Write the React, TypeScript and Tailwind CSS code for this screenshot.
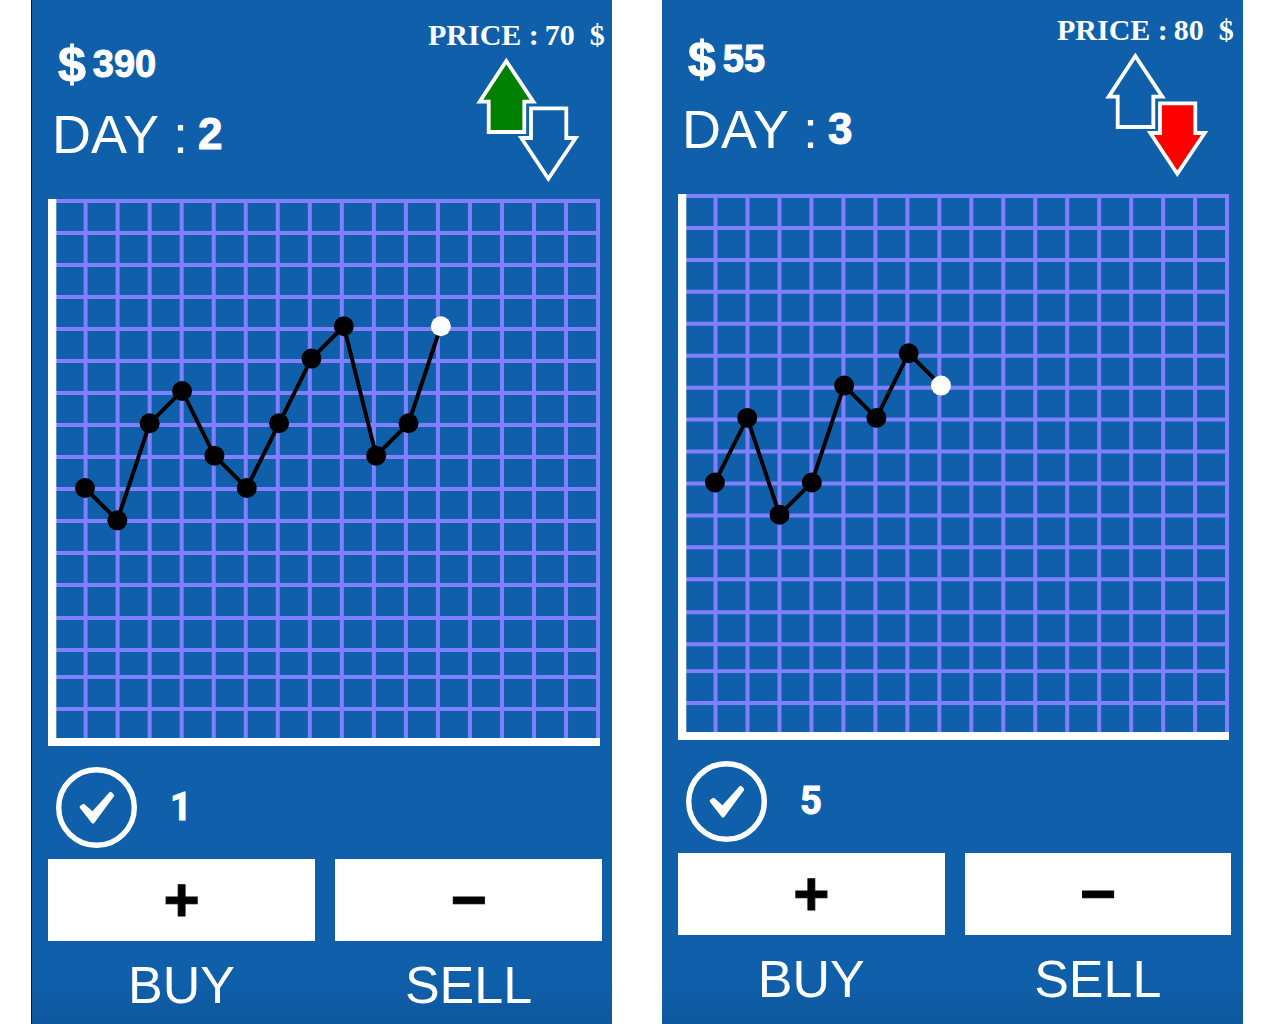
import { useId } from "react";

const COLUMNS = Array.from({ length: 17 }, (_, i) => 37.6 + i * 32.03);
const ROWS = [2, 34, 66, 98, 130, 162, 194, 226, 258, 290, 322, 354, 386, 419, 451, 478, 510];

const UP_ARROW = "30.3,3 3.7,43.7 12.7,43.7 12.7,74 48.3,74 48.3,43.7 57.3,43.7";
const DOWN_ARROW = "55,50.3 90.3,50.3 90.3,80 99.7,80 72.3,120.7 45.3,80 55,80";

type Game = {
  cash: number;
  day: number;
  price: number;
  shares: number;
  trend: "up" | "down";
  levels: number[];
};

function TrendArrows({ trend }: { trend: Game["trend"] }) {
  return (
    <svg
      className="ml-12 mt-1 block h-[124px] w-[104px]"
      viewBox="0 0 104 124"
      stroke="#fff"
      strokeWidth="3.8"
      role="img"
      aria-label={`Trend ${trend}`}
    >
      <polygon points={UP_ARROW} fill={trend === "up" ? "#008000" : "none"} />
      <polygon points={DOWN_ARROW} fill={trend === "down" ? "#ff0000" : "none"} />
    </svg>
  );
}

function Chart({ levels }: { levels: number[] }) {
  const points = levels.map((n, i) => ({ x: 37 + i * 32.35, y: 289 - n * 32.35 }));
  return (
    <svg className="block h-auto w-full" viewBox="0 0 552 547" role="img" aria-label="Price history">
      <g stroke="#8080ff" strokeWidth="4">
        {COLUMNS.map((x) => (
          <line key={x} x1={x} x2={x} y1="0" y2="540" />
        ))}
        {ROWS.map((y) => (
          <line key={y} x1="8" x2="552" y1={y} y2={y} />
        ))}
      </g>
      <path d="M0 0H8.3V539H552V547H0Z" fill="#fff" />
      <polyline
        points={points.map((p) => `${p.x},${p.y}`).join(" ")}
        fill="none"
        stroke="#000"
        strokeWidth="4"
      />
      {points.map((p, i) => (
        <circle key={i} cx={p.x} cy={p.y} r="10" fill={i === points.length - 1 ? "#fff" : "#000"} />
      ))}
    </svg>
  );
}

function CheckBadge() {
  return (
    <svg className="h-[81px] w-[81px]" viewBox="0 0 81 81" aria-hidden="true">
      <circle cx="40.5" cy="40.5" r="37.8" fill="none" stroke="#fff" strokeWidth="5.4" />
      <path
        d="M25.2 40L37 55L56.5 28.5L54.5 26.5L36.5 46.5L27.5 38.5Z"
        fill="#fff"
        stroke="#fff"
        strokeWidth="3.2"
        strokeLinejoin="round"
      />
    </svg>
  );
}

function Screen({ game, className }: { game: Game; className: string }) {
  const id = useId();
  return (
    <section
      className={`min-h-screen bg-[#105faa] bg-linear-to-b from-[#105faa] from-96% to-[#0d579d] pl-4 text-white ${className}`}
    >
      <header className="flex items-start justify-between">
        <div className="pt-6 pb-[30px]">
          <div className="flex h-[70px] items-center gap-[7px] pl-[10px]">
            <span className="text-[50px] font-bold [-webkit-text-stroke:1px_white]">$</span>
            <span className="text-[38px] font-bold [-webkit-text-stroke:1px_white]">{game.cash}</span>
          </div>
          <div className="flex h-[70px] items-center gap-[10px] pl-1">
            <span className="text-[54px]">DAY :</span>
            <span className="text-[44px] font-bold [-webkit-text-stroke:1px_white]">{game.day}</span>
          </div>
        </div>
        <div className="w-[184px] pt-[9px]">
          <p className="flex h-10 items-center gap-[6px] font-['Liberation_Serif',serif] text-[30px] font-bold whitespace-pre">
            <span>PRICE :</span>
            <span>{`${game.price}  $`}</span>
          </p>
          <TrendArrows trend={game.trend} />
        </div>
      </header>

      <div className="pr-3">
        <Chart levels={game.levels} />
      </div>

      <div className="mt-[21px] flex items-center gap-8 pl-2">
        <CheckBadge />
        <span className="w-6 text-center font-[Roboto,sans-serif] text-[38px] font-bold [-webkit-text-stroke:1px_white]">
          {game.shares}
        </span>
      </div>

      <div className="mt-[11px] grid grid-cols-2 gap-x-5 gap-y-[6px] pr-[10px]">
        <button
          id={`${id}-buy`}
          className="h-[82px] bg-white text-[62px] leading-none font-bold text-black [-webkit-text-stroke:1px_black]"
        >
          +
        </button>
        <button
          id={`${id}-sell`}
          className="h-[82px] bg-white text-[62px] leading-none font-bold text-black [-webkit-text-stroke:1px_black]"
        >
          −
        </button>
        <label htmlFor={`${id}-buy`} className="text-center text-[52px] leading-[76px]">
          BUY
        </label>
        <label htmlFor={`${id}-sell`} className="text-center text-[52px] leading-[76px]">
          SELL
        </label>
      </div>
    </section>
  );
}

const FIRST: Game = {
  cash: 390,
  day: 2,
  price: 70,
  shares: 1,
  trend: "up",
  levels: [0, -1, 2, 3, 1, 0, 2, 4, 5, 1, 2, 5],
};

const SECOND: Game = {
  cash: 55,
  day: 3,
  price: 80,
  shares: 5,
  trend: "down",
  levels: [0, 2, -1, 0, 3, 2, 4, 3],
};

export default function App() {
  return (
    <main className="grid min-h-screen grid-cols-2 gap-[50px] bg-white pr-[37px] pl-[31px] font-['Liberation_Sans',sans-serif]">
      <Screen game={FIRST} className="border-l border-[#041c38] pt-[5px]" />
      <Screen game={SECOND} className="pr-[2px]" />
    </main>
  );
}
